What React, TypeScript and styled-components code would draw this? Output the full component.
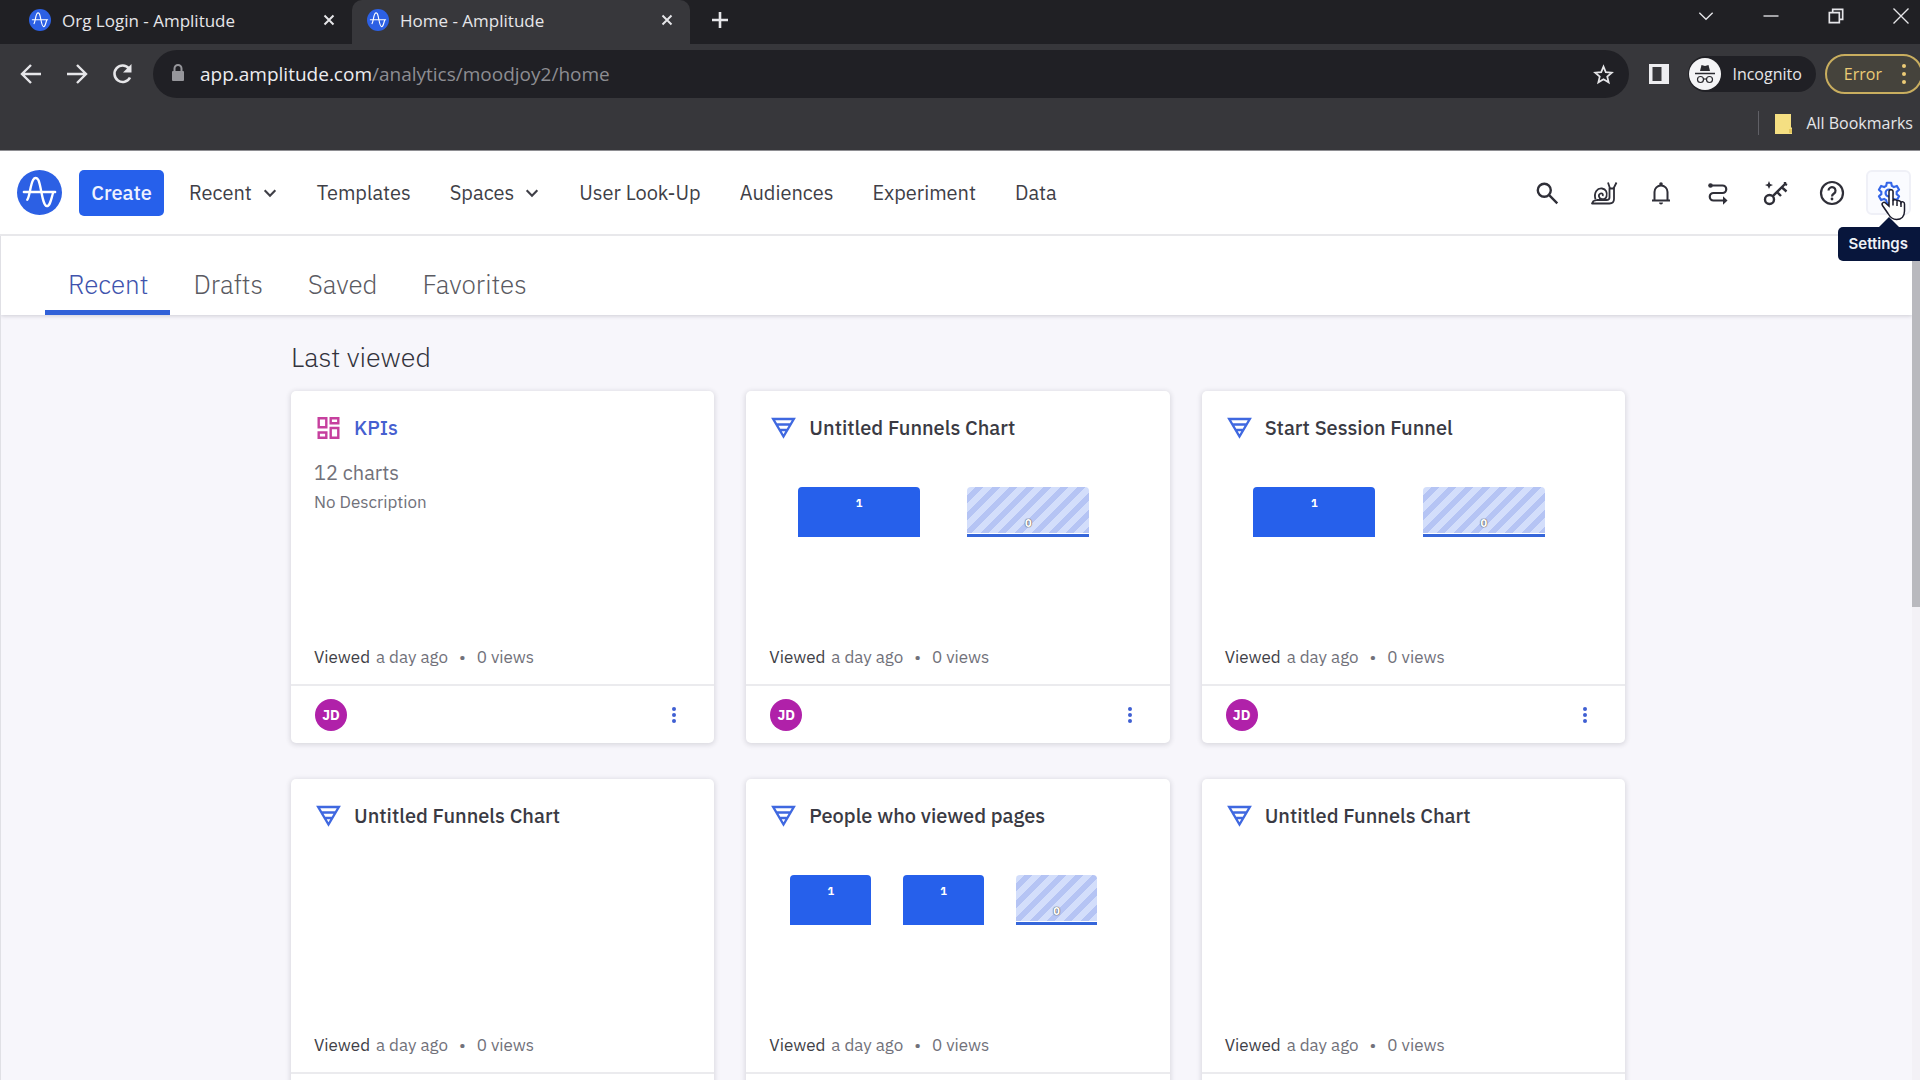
import React from "react";
import styled, { createGlobalStyle, css } from "styled-components";

const browserFont = `"Open Sans", "Noto Sans", sans-serif`;
const appFont = `"IBM Plex Sans", "Noto Sans", "Open Sans", sans-serif`;

const GlobalStyle = createGlobalStyle`
  *, *::before, *::after { box-sizing: border-box; }
  body { margin: 0; background: #f7f6fb; overflow: hidden; }
  button { border: 0; padding: 0; background: none; font: inherit; color: inherit; cursor: pointer; }
  a { color: inherit; text-decoration: none; }
  h1, h2, p { margin: 0; font-weight: inherit; }
  svg { display: block; flex: none; }
`;

const Window = styled.div`
  display: flex;
  flex-direction: column;
  height: 100vh;
  overflow: hidden;
  font-family: ${appFont};
  color: #3b3b45;
`;

/* ---------- browser chrome ---------- */

const Chrome = styled.div`
  flex: none;
  background: #37373b;
  color: #e6e6e9;
  font-family: ${browserFont};
  border-bottom: 1px solid #8e8e92;
`;

const TabStrip = styled.div`
  display: flex;
  height: 44px;
  background: #202024;
`;

const BrowserTab = styled.div<{ $active?: boolean }>`
  display: flex;
  align-items: center;
  gap: 11px;
  width: 338px;
  height: 44px;
  padding: 0 14px 4px 15px;
  border-radius: 10px 10px 0 0;
  background: ${(p) => (p.$active ? "#37373b" : "transparent")};
  font-size: 17px;
  &:first-child { margin-left: 14px; }
`;

const TabTitle = styled.span`
  flex: 1;
  white-space: nowrap;
`;

const StripButton = styled.button`
  display: grid;
  place-items: center;
  width: 60px;
  height: 40px;
`;

const WindowControls = styled.div`
  display: flex;
  gap: 5px;
  height: 32px;
  margin-left: auto;
  margin-right: -11px;
  button { height: 32px; }
`;

const Toolbar = styled.div`
  display: flex;
  align-items: center;
  height: 60px;
  padding-left: 8px;
`;

const ToolButton = styled.button`
  display: grid;
  place-items: center;
  width: 46px;
  height: 46px;
`;

const AddressBar = styled.div`
  display: flex;
  align-items: center;
  flex: 1;
  gap: 15px;
  height: 48px;
  margin-left: 7px;
  padding: 0 15px 0 18px;
  border-radius: 24px;
  background: #202025;
`;

const Address = styled.div`
  flex: 1;
  font-size: 19px;
  color: #ededf0;
  span { color: #8d8d92; }
`;

const PanelButton = styled(ToolButton)`
  width: 59px;
`;

const Incognito = styled.div`
  display: flex;
  align-items: center;
  gap: 8px;
  height: 36px;
  padding-right: 14px;
  border-radius: 18px;
  background: #202025;
  font-size: 16px;
  margin-right: 9px;
`;

const ErrorButton = styled.button`
  display: flex;
  align-items: center;
  gap: 20px;
  height: 40px;
  padding: 0 15px 0 17px;
  margin-right: -3px;
  border: 2px solid #c9ae5f;
  border-radius: 20px;
  background: #45433c;
  color: #eccb76;
  font-size: 16px;
`;

const Bookmarks = styled.div`
  display: flex;
  align-items: center;
  justify-content: flex-end;
  gap: 16px;
  height: 46px;
  padding: 0 7px 8px 0;
  font-size: 16px;
`;

const BookmarkSeparator = styled.span`
  width: 1px;
  height: 24px;
  background: #606066;
`;

const BookmarkLink = styled.a`
  display: flex;
  align-items: center;
  gap: 14px;
`;

/* ---------- app header ---------- */

const Header = styled.header`
  display: flex;
  align-items: center;
  flex: none;
  height: 85px;
  padding: 0 9px 0 17px;
  border-bottom: 2px solid #e8e8eb;
  background: #fff;
`;

const CreateButton = styled.button`
  height: 46px;
  width: 85px;
  margin: 0 25px 0 17px;
  border-radius: 5px;
  background: #2660eb;
  color: #eef2ff;
  font-size: 20px;
  font-weight: 500;
`;

const Nav = styled.nav`
  display: flex;
  align-items: center;
  gap: 39px;
  font-size: 20px;
  color: #3f3f47;
`;

const NavItem = styled.a`
  display: flex;
  align-items: center;
  gap: 10px;
  white-space: nowrap;
`;

const HeaderActions = styled.div`
  display: flex;
  gap: 12px;
  margin-left: auto;
`;

const ActionButton = styled.button<{ $active?: boolean }>`
  position: relative;
  display: grid;
  place-items: center;
  width: 45px;
  height: 45px;
  border-radius: 6px;
  color: #2f2f38;
  ${(p) =>
    p.$active &&
    css`
      border: 2px solid #eff0f7;
      background: #fafbff;
      color: #3466e8;
    `}
`;

const Tooltip = styled.span`
  position: absolute;
  z-index: 3;
  top: 55px;
  right: -15px;
  padding: 0 16px 0 11px;
  border-radius: 5px 0 0 5px;
  background: #08163c;
  color: #eef0f6;
  font: 600 15px/34px "Inter", sans-serif;
  &::before {
    content: "";
    position: absolute;
    top: -10px;
    left: 41px;
    border: 10px solid transparent;
    border-top: 0;
    border-bottom-color: #08163c;
  }
`;

const Pointer = styled.svg`
  position: absolute;
  z-index: 4;
  left: 11px;
  top: 16px;
`;

/* ---------- content ---------- */

const Scroller = styled.div`
  display: flex;
  flex: 1;
  min-height: 0;
  border-left: 1px solid #e0e0e5;
`;

const Content = styled.main`
  flex: 1;
  min-width: 0;
  overflow: hidden;
`;

const ScrollTrack = styled.div`
  width: 8px;
  background: #f3f1f6;
`;

const ScrollThumb = styled.div`
  height: 44%;
  background: #b9b9be;
`;

const Tabs = styled.div`
  display: flex;
  align-items: stretch;
  height: 79px;
  padding-left: 44px;
  background: #fff;
  box-shadow: 0 1px 4px rgba(40, 40, 60, 0.2);
`;

const Tab = styled.button<{ $active?: boolean }>`
  padding: 26px 22px 4px 23px;
  border-bottom: 5px solid ${(p) => (p.$active ? "#3161d8" : "transparent")};
  color: ${(p) => (p.$active ? "#4053ad" : "#5a5a62")};
  font-size: 26px;
  line-height: 44px;
  font-weight: 300;
`;

const Section = styled.section`
  max-width: 1337px;
  margin: 0 auto;
  padding: 22px 0 0 3px;
`;

const SectionTitle = styled.h1`
  padding-bottom: 14px;
  font-size: 27px;
  line-height: 40px;
  font-weight: 300;
  color: #33333c;
`;

const Grid = styled.div`
  display: grid;
  grid-template-columns: repeat(3, 1fr);
  gap: 36px 32px;
`;

const Card = styled.article`
  display: flex;
  flex-direction: column;
  height: 352px;
  border-radius: 5px;
  background: #fff;
  box-shadow: 0 1px 5px 1px rgba(40, 40, 60, 0.14);
`;

const CardBody = styled.div`
  flex: 1;
  display: flex;
  flex-direction: column;
  padding: 22px 24px 12px 23px;
`;

const CardTitle = styled.a<{ $link?: boolean }>`
  display: flex;
  align-items: center;
  gap: 13px;
  padding-left: 2px;
  font-size: 20px;
  line-height: 30px;
  font-weight: 500;
  color: ${(p) => (p.$link ? "#4660d0" : "#3a3a43")};
`;

const ChartCount = styled.p`
  padding-top: 15px;
  font-size: 20px;
  line-height: 30px;
  color: #71717a;
`;

const Description = styled.p`
  font-size: 17px;
  line-height: 28px;
  color: #71717a;
`;

const Chart = styled.div`
  display: flex;
  width: 90%;
  height: 50px;
  margin: 44px 0 0 5px;
`;

const Slot = styled.div`
  display: flex;
  flex: 1;
  justify-content: center;
`;

const Bar = styled.div<{ $empty?: boolean }>`
  display: flex;
  justify-content: center;
  width: 72%;
  padding-top: 8px;
  border-radius: 4px 4px 0 0;
  background: #2660eb;
  color: #fff;
  font-size: 11px;
  line-height: 16px;
  font-weight: 700;
  ${(p) =>
    p.$empty &&
    css`
      padding-top: 28px;
      border-bottom: 3px solid #3566da;
      background: linear-gradient(#fff, #fff) bottom / 100% 1px no-repeat,
        repeating-linear-gradient(135deg, #d3defb 0 6px, #b5c4f4 6px 12px);
      text-shadow: 0 0 1px #666, 0 0 1px #666, 0 0 1px #666;
    `}
`;

const Meta = styled.p`
  display: flex;
  gap: 6px;
  margin-top: auto;
  font-size: 17px;
  line-height: 30px;
  color: #71717a;
  strong { font-weight: 400; color: #3f3f47; }
  i { padding: 0 5px; font-style: normal; }
`;

const CardFooter = styled.footer`
  display: flex;
  align-items: center;
  justify-content: space-between;
  height: 59px;
  padding: 0 25px 0 24px;
  border-top: 2px solid #ebebee;
`;

const Avatar = styled.span`
  display: grid;
  place-items: center;
  width: 32px;
  height: 32px;
  border-radius: 50%;
  background: #b021a9;
  color: #fff;
  font-size: 14px;
  line-height: 1;
  font-weight: 700;
`;

const MoreButton = styled.button`
  display: grid;
  place-items: center;
  width: 30px;
  height: 30px;
  color: #3f5fd2;
`;

/* ---------- icons ---------- */

const Logo = ({ size }: { size: number }) => (
  <svg width={size} height={size} viewBox="0 0 46 46" fill="none" stroke="#fff" strokeWidth="2.4" strokeLinecap="round">
    <circle cx="23" cy="23" r="23" fill="#2c60e4" stroke="none" />
    <path d="M10.500 30.500C13 27.500 13.500 15 16.500 10c1.500-2.500 4-2.500 5.500.5C25 18 26 36.500 30.500 37c3.500 0 4.500-8 6.500-14M7 22.500h32" />
  </svg>
);

type StrokeProps = { size: number; d: string; sw?: number };
const Stroke = ({ size, d, sw = 2 }: StrokeProps) => (
  <svg width={size} height={size} viewBox="0 0 24 24" fill="none" stroke="currentColor" strokeWidth={sw}>
    <path d={d} />
  </svg>
);

const Reload = () => (
  <svg width="24" height="24" viewBox="0 0 24 24" fill="none" stroke="#e6e6e9" strokeWidth="2.6">
    <path d="M19 15.500A8.200 8.200 0 1 1 18 6.500" />
    <path d="M20.500 2v8.500H12z" fill="#e6e6e9" stroke="none" />
  </svg>
);

const Lock = () => (
  <svg width="14" height="20" viewBox="0 0 14 20" fill="none">
    <rect x="1" y="7" width="12" height="10" rx="1" fill="#96969b" />
    <path d="M3.500 8V4.500a3.500 3.500 0 0 1 7 0V8" stroke="#96969b" strokeWidth="2" />
  </svg>
);

const SidePanel = () => (
  <svg width="20" height="20" viewBox="0 0 20 20">
    <path fill="#ededf0" fillRule="evenodd" d="M0 0h20v20H0zM3.500 3h9v14h-9z" />
  </svg>
);

const Spy = () => (
  <svg width="36" height="36" viewBox="0 0 36 36" fill="none">
    <circle cx="17" cy="18" r="16" fill="#f4f4f6" />
    <path d="M13.500 9l3.500 1 3.500-1 1.500 6H12z" fill="#2b2b30" />
    <path d="M7 17.500h20" stroke="#2b2b30" strokeWidth="1.500" />
    <circle cx="12.500" cy="23.500" r="3" stroke="#2b2b30" strokeWidth="1.200" />
    <circle cx="21.500" cy="23.500" r="3" stroke="#2b2b30" strokeWidth="1.200" />
    <path d="M15.500 23h3" stroke="#2b2b30" strokeWidth="1.200" />
  </svg>
);

const Dots = ({ gap, r }: { gap: number; r: number }) => (
  <svg width={r * 2} height={gap * 2 + r * 2} fill="currentColor">
    {[0, 1, 2].map((i) => (
      <circle key={i} cx={r} cy={r + i * gap} r={r} />
    ))}
  </svg>
);

const Folder = () => (
  <svg width="17" height="21" viewBox="0 0 17 21">
    <path d="M0 1h16v13l1 1v6H0z" fill="#f5df82" />
    <path d="M14 16h3v4h-3z" fill="#e3c65d" />
  </svg>
);

const Snail = () => (
  <svg width="28" height="28" viewBox="0 0 28 28" fill="none" stroke="currentColor" strokeWidth="1.800" strokeLinejoin="round">
    <path d="M2 24.500h17.500c3.500 0 4.500-2 4.500-4.500V9.500h-4.500v9c0 2-1 2.500-3 2.500H7l-3.500 1z" />
    <path d="M5.500 20.500C3.500 13 7.500 9 12 9.500c4 .5 5.500 4 4.500 8 -.5 2.500-3 3-5 2.500-3-.5-3.500-4.500-1-5.500 2-.5 3 1 2 2.500" />
    <path d="M20 9.500 18 3.500M23.500 9.500l3-6" />
  </svg>
);

const Bell = () => (
  <svg width="26" height="26" viewBox="0 0 26 26" fill="none" stroke="currentColor" strokeWidth="2">
    <path d="M4 20.500h18M6.500 20.500V12a6.500 6.500 0 0 1 13 0v8.500" />
    <circle cx="13" cy="4" r="1.800" fill="currentColor" stroke="none" />
    <path d="M11 22.500h4a2 2 0 0 1-4 0z" fill="currentColor" stroke="none" />
  </svg>
);

const Route = () => (
  <svg width="26" height="26" viewBox="0 0 26 26" fill="none" stroke="currentColor" strokeWidth="2.200">
    <path d="M5 5.500h12.500a3.700 3.700 0 0 1 0 7.500h-9a3.700 3.700 0 0 0 0 7.500H20" />
    <circle cx="5.500" cy="5.500" r="2.300" fill="currentColor" stroke="none" />
    <path d="M18 16.200 22.500 20.500 18 24.800z" fill="currentColor" stroke="none" />
  </svg>
);

const KeyIcon = () => (
  <svg width="28" height="28" viewBox="0 0 28 28" fill="none" stroke="currentColor" strokeWidth="2.400">
    <circle cx="8.500" cy="20.500" r="4.500" />
    <path d="M11.800 17.200 24 5M16 13l4 4M20.500 8l5 4.500M24 3v2l2 1" />
    <path d="M8 2l1.200 3L12 6 9.200 7.200 8 10 6.800 7.200 4 6l2.800-1z" fill="currentColor" stroke="none" />
  </svg>
);

const Help = () => (
  <svg width="26" height="26" viewBox="0 0 26 26" fill="none" stroke="currentColor" strokeWidth="2.200">
    <circle cx="13" cy="13" r="11" />
    <path d="M9.500 10.500a3.500 3.500 0 1 1 5.500 3c-1.500 1-2 1.500-2 3" />
    <circle cx="13" cy="19" r="1.400" fill="currentColor" stroke="none" />
  </svg>
);

const Gear = () => (
  <svg width="26" height="26" viewBox="0 0 24 24" fill="none" stroke="currentColor" strokeWidth="2" strokeLinejoin="round">
    <path d="M10 2.500h4l.6 2.900 1.900 1.100 2.800-1 2 3.500-2.200 1.900v2.200l2.200 1.900-2 3.500-2.800-1-1.900 1.100-.6 2.900h-4l-.6-2.900-1.900-1.100-2.800 1-2-3.500 2.200-1.900v-2.200L2.700 9l2-3.500 2.800 1 1.900-1.100z" />
    <circle cx="12" cy="12" r="3.200" />
  </svg>
);

const HandPointer = () => (
  <Pointer width="28" height="34" viewBox="0 0 28 34" aria-hidden="true">
    <path
      d="M10 3.500c0-2.500 4-2.500 4 0V13c.5-2 4-1.500 4 .5 .5-1.500 4-1 4 1 .8-1.300 3.500-.8 3.500 1.500v7c0 5-3 8.500-8 8.500-4.500 0-6.500-2.500-8.500-6l-5.500-8c-1.500-2.500 1.500-4 3-2.500L10 18z"
      fill="#fff"
      stroke="#1c1c2c"
      strokeWidth="1.500"
    />
    <path d="M14 12.500v5M18 13.500v4.500M22 14.500V19" stroke="#1c1c2c" strokeWidth="1.500" />
  </Pointer>
);

const FunnelIcon = () => (
  <svg width="25" height="22" viewBox="0 0 25 22" fill="none" stroke="#3f68e0" strokeWidth="2.400">
    <path d="M2.200 2h20.600L12.500 19.500zM5 7.500h15M8 13h9" />
  </svg>
);

const DashboardIcon = () => (
  <svg width="25" height="24" viewBox="0 0 25 24" fill="none" stroke="#c63f9e" strokeWidth="2.400">
    <path d="M2.700 2.200h7.600v9.100H2.700zM14.700 2.200h7.600v5h-7.600zM2.700 16.500h7.600v5.300H2.700zM14.700 12h7.600v9.800h-7.600z" />
  </svg>
);

/* ---------- page ---------- */

type Item = { title: string; dashboard?: boolean; bars?: number[] };

const items: Item[] = [
  { title: "KPIs", dashboard: true },
  { title: "Untitled Funnels Chart", bars: [1, 0] },
  { title: "Start Session Funnel", bars: [1, 0] },
  { title: "Untitled Funnels Chart" },
  { title: "People who viewed pages", bars: [1, 1, 0] },
  { title: "Untitled Funnels Chart" },
];

const navItems = [
  { label: "Recent", menu: true },
  { label: "Templates" },
  { label: "Spaces", menu: true },
  { label: "User Look-Up" },
  { label: "Audiences" },
  { label: "Experiment" },
  { label: "Data" },
];

const CLOSE = "M6 6l12 12M18 6 6 18";

const ItemCard = ({ item }: { item: Item }) => (
  <Card>
    <CardBody>
      <CardTitle href="#" $link={item.dashboard}>
        {item.dashboard ? <DashboardIcon /> : <FunnelIcon />}
        {item.title}
      </CardTitle>
      {item.dashboard && (
        <>
          <ChartCount>12 charts</ChartCount>
          <Description>No Description</Description>
        </>
      )}
      {item.bars && (
        <Chart>
          {item.bars.map((value, i) => (
            <Slot key={i}>
              <Bar $empty={value === 0}>{value}</Bar>
            </Slot>
          ))}
        </Chart>
      )}
      <Meta>
        <strong>Viewed</strong>
        <span>a day ago</span>
        <i>•</i>
        <span>0 views</span>
      </Meta>
    </CardBody>
    <CardFooter>
      <Avatar>JD</Avatar>
      <MoreButton aria-label="More options">
        <Dots gap={6} r={2} />
      </MoreButton>
    </CardFooter>
  </Card>
);

export default function App() {
  return (
    <Window>
      <GlobalStyle />
      <Chrome>
        <TabStrip>
          {["Org Login - Amplitude", "Home - Amplitude"].map((title, i) => (
            <BrowserTab key={title} $active={i === 1}>
              <Logo size={22} />
              <TabTitle>{title}</TabTitle>
              <button aria-label="Close tab">
                <Stroke size={18} d={CLOSE} sw={2.6} />
              </button>
            </BrowserTab>
          ))}
          <StripButton aria-label="New tab">
            <Stroke size={24} d="M12 4v16M4 12h16" sw={2.6} />
          </StripButton>
          <WindowControls>
            <StripButton aria-label="Search tabs">
              <Stroke size={20} d="M4 8l8 8 8-8" sw={1.6} />
            </StripButton>
            <StripButton aria-label="Minimize">
              <Stroke size={20} d="M3 12h18" sw={1.6} />
            </StripButton>
            <StripButton aria-label="Restore">
              <Stroke size={20} d="M4 8h12v12H4zM8 8V4h12v12h-4" sw={2} />
            </StripButton>
            <StripButton aria-label="Close window">
              <Stroke size={20} d="M3 3l18 18M21 3 3 21" sw={1.6} />
            </StripButton>
          </WindowControls>
        </TabStrip>
        <Toolbar>
          <ToolButton aria-label="Back">
            <Stroke size={24} d="M22 12H4M12 3l-9 9 9 9" sw={2.4} />
          </ToolButton>
          <ToolButton aria-label="Forward">
            <Stroke size={24} d="M2 12h18M12 3l9 9-9 9" sw={2.4} />
          </ToolButton>
          <ToolButton aria-label="Reload">
            <Reload />
          </ToolButton>
          <AddressBar>
            <Lock />
            <Address>
              app.amplitude.com<span>/analytics/moodjoy2/home</span>
            </Address>
            <button aria-label="Bookmark this page">
              <Stroke
                size={21}
                d="M12 3l2.600 6.300 6.900.6-5.200 4.500 1.600 6.600L12 17.500 6.100 21l1.600-6.600L2.500 9.900l6.900-.6z"
              />
            </button>
          </AddressBar>
          <PanelButton aria-label="Side panel">
            <SidePanel />
          </PanelButton>
          <Incognito>
            <Spy />
            Incognito
          </Incognito>
          <ErrorButton>
            Error
            <Dots gap={8} r={2} />
          </ErrorButton>
        </Toolbar>
        <Bookmarks>
          <BookmarkSeparator />
          <BookmarkLink href="#">
            <Folder />
            All Bookmarks
          </BookmarkLink>
        </Bookmarks>
      </Chrome>

      <Header>
        <Logo size={45} />
        <CreateButton>Create</CreateButton>
        <Nav>
          {navItems.map((item) => (
            <NavItem key={item.label} href="#">
              {item.label}
              {item.menu && <Stroke size={16} d="M4 8l8 8 8-8" sw={3.2} />}
            </NavItem>
          ))}
        </Nav>
        <HeaderActions>
          <ActionButton aria-label="Search">
            <Stroke size={26} d="M15.500 9.500a6 6 0 1 1-12 0 6 6 0 0 1 12 0zM14 14l7.500 7.500" sw={2.2} />
          </ActionButton>
          <ActionButton aria-label="Activity">
            <Snail />
          </ActionButton>
          <ActionButton aria-label="Notifications">
            <Bell />
          </ActionButton>
          <ActionButton aria-label="Journeys">
            <Route />
          </ActionButton>
          <ActionButton aria-label="Access keys">
            <KeyIcon />
          </ActionButton>
          <ActionButton aria-label="Help">
            <Help />
          </ActionButton>
          <ActionButton $active>
            <Gear />
            <Tooltip>Settings</Tooltip>
            <HandPointer />
          </ActionButton>
        </HeaderActions>
      </Header>

      <Scroller>
        <Content>
          <Tabs>
            {["Recent", "Drafts", "Saved", "Favorites"].map((tab, i) => (
              <Tab key={tab} $active={i === 0}>
                {tab}
              </Tab>
            ))}
          </Tabs>
          <Section>
            <SectionTitle>Last viewed</SectionTitle>
            <Grid>
              {items.map((item, i) => (
                <ItemCard key={i} item={item} />
              ))}
            </Grid>
          </Section>
        </Content>
        <ScrollTrack>
          <ScrollThumb />
        </ScrollTrack>
      </Scroller>
    </Window>
  );
}
